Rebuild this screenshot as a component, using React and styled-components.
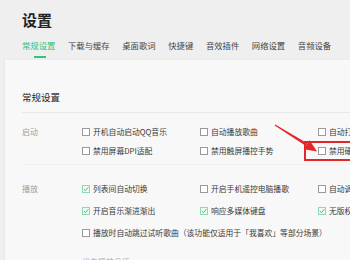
import React from 'react';
import styled, { createGlobalStyle } from 'styled-components';

const GlobalStyle = createGlobalStyle`
  html, body {
    margin: 0;
    padding: 0;
    overflow: hidden;
    background: #efefef;
    font-family: "Noto Sans CJK SC", "Noto Sans", sans-serif;
  }
`;

const tabs = ['常规设置', '下载与缓存', '桌面歌词', '快捷键', '音效插件', '网络设置', '音频设备'];

const startup = [
  [
    { text: '开机自动启动QQ音乐' },
    { text: '自动播放歌曲' },
    { text: '自动打开主界面' }
  ],
  [
    { text: '禁用屏幕DPI适配' },
    { text: '禁用触屏播控手势' },
    { text: '禁用硬件加速' }
  ]
];

const playback = [
  [
    { text: '列表间自动切换', checked: true },
    { text: '开启手机遥控电脑播歌' },
    { text: '自动调节音量' }
  ],
  [
    { text: '开启音乐渐进渐出', checked: true },
    { text: '响应多媒体键盘', checked: true },
    { text: '无版权歌曲自动跳过', checked: true }
  ]
];

function Check({ checked, text }) {
  return (
    <Item>
      <Box checked={checked}>
        {checked && (
          <svg width="6" height="6" viewBox="0 0 6 6">
            <path d="M0.8 3.1 L2.4 4.6 L5.3 1.3" fill="none" stroke="#3cbf7e" strokeWidth="1" />
          </svg>
        )}
      </Box>
      <ItemText>{text}</ItemText>
    </Item>
  );
}

export default class App extends React.Component {
  render() {
    return (
      <Page>
        <GlobalStyle />
        <Header>
          <Title>设置</Title>
          <Tabs>
            {tabs.map((t, i) => (
              <Tab key={t} active={i === 0}>
                {t}
              </Tab>
            ))}
          </Tabs>
        </Header>
        <Panel>
          <SectionTitle>常规设置</SectionTitle>
          <Divider />
          <Group rowGap={8}>
            <Label>启动</Label>
            {startup[0].map(it => (
              <Check key={it.text} {...it} />
            ))}
            <span />
            {startup[1].map(it => (
              <Check key={it.text} {...it} />
            ))}
          </Group>
          <Divider faint />
          <Group rowGap={11} top={18}>
            <Label>播放</Label>
            {playback[0].map(it => (
              <Check key={it.text} {...it} />
            ))}
            <span />
            {playback[1].map(it => (
              <Check key={it.text} {...it} />
            ))}
            <span />
            <Wide>
              <Check text="播放时自动跳过试听歌曲（该功能仅适用于「我喜欢」等部分场景）" />
            </Wide>
            <span />
            <Wide>
              <SubLabel>优先播放品质:</SubLabel>
            </Wide>
          </Group>
        </Panel>
        <Highlight />
        <Arrow width="350" height="260" viewBox="0 0 350 260">
          <polygon
            points="274.7,125.5 275.3,124.5 307.6,143.4 306.0,146.0"
            fill="#e52626"
          />
          <polygon points="317,151.5 304.0,149.2 309.6,140.2" fill="#e52626" />
        </Arrow>
      </Page>
    );
  }
}

const Page = styled.div`
  position: relative;
  width: 350px;
  height: 260px;
  overflow: hidden;
  display: flex;
  flex-direction: column;
  background: #efefef;
`;

const Header = styled.section`
  padding: 9px 0 0 22px;
  display: flex;
  flex-direction: column;
`;

const Title = styled.h1`
  margin: 0;
  font-size: 15px;
  line-height: 21px;
  font-weight: 700;
  color: #222;
`;

const Tabs = styled.nav`
  display: flex;
  gap: 12.6px;
  margin-top: 9px;
  white-space: nowrap;
`;

const Tab = styled.span`
  position: relative;
  font-size: 8.35px;
  line-height: 12px;
  padding-bottom: 9px;
  color: ${p => (p.active ? '#31c27c' : '#444')};
  &::after {
    content: '';
    display: ${p => (p.active ? 'block' : 'none')};
    position: absolute;
    left: 50%;
    bottom: 2px;
    width: 12px;
    margin-left: -5px;
    height: 2px;
    background: #31c27c;
  }
`;

const Panel = styled.section`
  flex: 1;
  margin-left: 5px;
  padding: 30px 0 0 17px;
  background: #f8f8f8;
  box-shadow: -1px 0 3px rgba(0, 0, 0, 0.04);
`;

const SectionTitle = styled.h2`
  margin: 0;
  font-size: 9.5px;
  line-height: 14px;
  font-weight: 400;
  color: #222;
`;

const Divider = styled.div`
  height: 1px;
  margin-top: 8px;
  background: ${p => (p.faint ? '#f2f2f2' : '#e8e8e8')};
`;

const Group = styled.div`
  display: grid;
  grid-template-columns: 60px 118px 118px 118px;
  row-gap: ${p => p.rowGap}px;
  padding-top: ${p => p.top || 13}px;
`;

const Label = styled.span`
  font-size: 8px;
  line-height: 11px;
  color: #a0a0a0;
`;

const Wide = styled.div`
  grid-column: 2 / 5;
`;

const SubLabel = styled.span`
  display: block;
  margin-top: 7px;
  font-size: 8px;
  line-height: 11px;
  color: #a8a8a8;
`;

const Item = styled.label`
  display: flex;
  align-items: center;
  gap: 3px;
  white-space: nowrap;
  height: 11px;
`;

const Box = styled.span`
  box-sizing: border-box;
  width: 8px;
  height: 8px;
  flex: none;
  display: flex;
  align-items: center;
  justify-content: center;
  border: 1px solid ${p => (p.checked ? '#8fd9b2' : '#9a9a9a')};
  background: ${p => (p.checked ? '#eefaf3' : '#fff')};
`;

const ItemText = styled.span`
  font-size: 7.8px;
  line-height: 11px;
  color: #3a3a3a;
`;

const Highlight = styled.div`
  position: absolute;
  left: 304px;
  top: 141px;
  width: 60px;
  height: 20px;
  box-sizing: border-box;
  border: 2px solid #e52626;
`;

const Arrow = styled.svg`
  position: absolute;
  left: 0;
  top: 0;
  pointer-events: none;
`;
